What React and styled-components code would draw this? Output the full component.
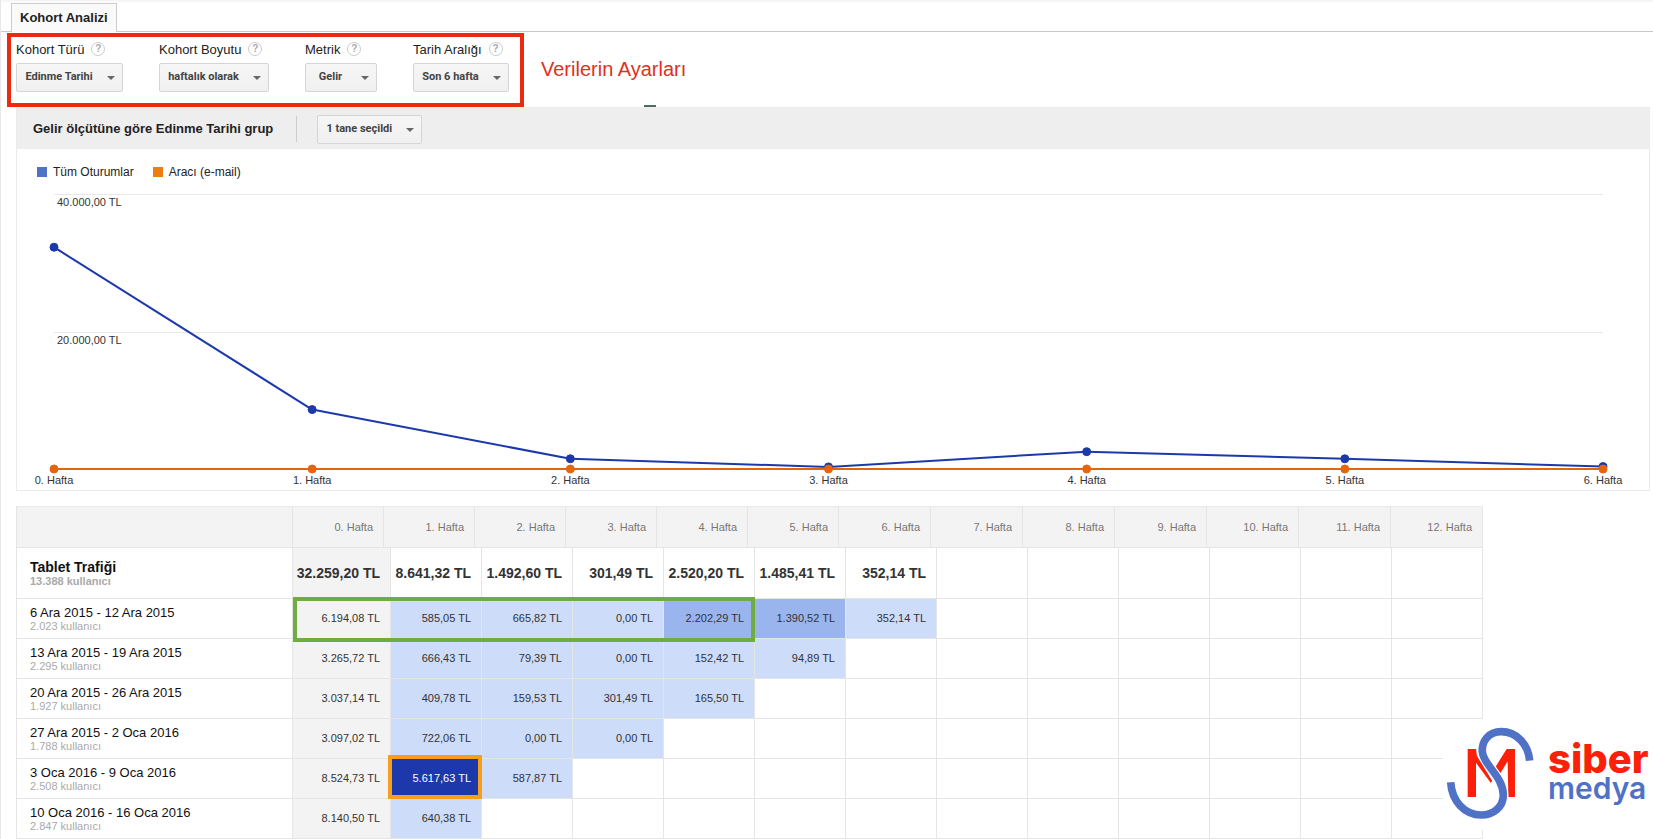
import React from 'react';
import styled, { createGlobalStyle } from 'styled-components';

const GlobalStyle = createGlobalStyle`
    *{
        box-sizing: border-box;
    }
    body{
        margin: 0;
        background-color: #fff;
        color: #222;
        font-family: "Liberation Sans", Arial, sans-serif;
        font-size: 13px;
    }
`;

const Page = styled.main`
    position: relative;
    border-left: 1px solid #e8e8e8;
`;

const TabBar = styled.nav`
    display: flex;
    padding: 3px 0 0 10px;
    border-bottom: 1px solid #c8c8c8;
    box-shadow: inset 0 3px 3px -2px #eee;
`;

const Tab = styled.a`
    height: 29px;
    margin-bottom: -1px;
    padding: 0 8px;
    border: 1px solid #ccc;
    border-bottom: 0;
    background-color: #fafafa;
    color: #222;
    font-weight: bold;
    line-height: 28px;
    text-decoration: none;
`;

const SettingsRow = styled.div`
    display: flex;
    align-items: center;
    gap: 17px;
    padding: 1px 0 0 6px;
`;

const Settings = styled.form`
    display: flex;
    gap: 36px;
    height: 74px;
    padding: 4px 11px 0 5px;
    border: 4px solid #ec2a10;
`;

const Note = styled.p`
    margin: 0;
    padding-bottom: 2px;
    color: #e0301e;
    font-size: 20px;
`;

const Field = styled.div`
    width: ${props => props.$width}px;
`;

const LabelLine = styled.div`
    display: flex;
    align-items: center;
    gap: 7px;
    height: 16px;
    margin-bottom: 6px;
    white-space: nowrap;
`;

const Help = styled.button`
    width: 14px;
    height: 14px;
    padding: 0;
    border: 1px solid #ccc;
    border-radius: 50%;
    background: #fff;
    color: #aaa;
    font: bold 10px/12px "Liberation Sans", Arial, sans-serif;
`;

const SelectBox = styled.div`
    position: relative;
    width: ${props => props.$width}px;
    svg{
        position: absolute;
        right: 8px;
        top: 13px;
        pointer-events: none;
    }
`;

const Select = styled.select`
    appearance: none;
    display: block;
    width: 100%;
    height: 29px;
    padding: 0 21px 2px 0;
    border: 1px solid #d5d5d5;
    border-radius: 2px;
    background: linear-gradient(#f6f6f6, #f0f0f0);
    color: #444;
    font: bold 11px Roboto, sans-serif;
    text-align: center;
    text-align-last: center;
`;

const Panel = styled.section`
    position: relative;
    margin: 0 3px 15px 15px;
    border: 1px solid #ebebeb;
    border-top: 0;
    &::before{
        content: "";
        position: absolute;
        top: -2px;
        left: 627px;
        width: 12px;
        height: 2px;
        background-color: #4d6b60;
    }
`;

const PanelHeader = styled.header`
    display: flex;
    align-items: center;
    height: 42px;
    padding: 2px 0 0 16px;
    background-color: #eee;
    h2{
        margin: 0;
        padding-right: 23px;
        border-right: 1px solid #ccc;
        margin-right: 20px;
        font-size: 13px;
        line-height: 26px;
    }
`;

const Legend = styled.ul`
    display: flex;
    gap: 19px;
    margin: 0;
    padding: 15px 0 0 20px;
    list-style: none;
    font-size: 12px;
    line-height: 16px;
`;

const LegendItem = styled.li`
    display: flex;
    align-items: center;
    gap: 6px;
    &::before{
        content: "";
        width: 10px;
        height: 10px;
        background-color: ${props => props.$color};
    }
`;

const ChartBox = styled.div`
    padding: 6px 46px 0 37px;
    svg{
        display: block;
        width: 100%;
        height: 304px;
        overflow: visible;
    }
    text{
        font-size: 11px;
        fill: #333;
    }
`;

const Table = styled.table`
    display: block;
    margin: 0 170px 0 15px;
    border-left: 1px solid #e5e5e5;
    thead, tbody{
        display: block;
    }
    tr{
        display: grid;
        position: relative;
    }
`;

const HeadRow = styled.tr`
    grid-template-columns: 276fr repeat(6, 91fr) repeat(7, 92fr);
    height: 42px;
    background-color: #f3f3f3;
    border-top: 1px solid #ebebeb;
    border-bottom: 1px solid #e5e5e5;
`;

const HeadCell = styled.th`
    padding: 0 10px 0 0;
    border-right: 1px solid #e5e5e5;
    color: #777;
    font-size: 11px;
    font-weight: normal;
    line-height: 40px;
    text-align: right;
`;

const BodyRow = styled.tr`
    grid-template-columns: 276fr 98fr repeat(12, 91fr);
    height: ${props => props.$total ? 51 : 40}px;
    ${props => props.$mark && `
        &::after{
            content: "";
            position: absolute;
            z-index: 1;
            grid-column: ${props.$mark.columns};
            inset: ${props.$mark.inset};
            border: 4px solid ${props.$mark.color};
        }
    `}
`;

const NameCell = styled.th`
    padding: ${props => props.$total ? 11 : 6}px 0 0 13px;
    border-bottom: 1px solid #e5e5e5;
    border-right: 1px solid #e5e5e5;
    color: #111;
    font-size: ${props => props.$total ? 14 : 13}px;
    font-weight: ${props => props.$total ? 'bold' : 'normal'};
    line-height: 16px;
    text-align: left;
    small{
        display: block;
        color: #aaa;
        font-size: 11px;
        line-height: ${props => props.$total ? 12 : 10}px;
    }
`;

const shades = {
    base: '#f3f3f3',
    low: '#cddcf9',
    mid: '#9ab4ee',
    high: '#1c38aa',
};

const ValueCell = styled.td`
    display: flex;
    align-items: center;
    justify-content: flex-end;
    min-width: 0;
    padding: 0 10px ${props => props.$total ? 0 : 2}px 0;
    border-bottom: 1px solid #e5e5e5;
    border-right: 1px solid #e5e5e5;
    background-color: ${props => shades[props.$shade] || '#fff'};
    color: ${props => props.$shade === 'high' ? '#fff' : '#333'};
    font-size: ${props => props.$total ? 14 : 11}px;
    font-weight: ${props => props.$total ? 'bold' : 'normal'};
    white-space: nowrap;
`;

const LogoBox = styled.div`
    position: absolute;
    z-index: 2;
    right: 0;
    bottom: 9px;
    height: 111px;
    background-color: #fff;
    svg{
        display: block;
    }
`;

const filters = [
    { id: 'type', label: 'Kohort Türü', value: 'Edinme Tarihi', width: 107 },
    { id: 'size', label: 'Kohort Boyutu', value: 'haftalık olarak', width: 110 },
    { id: 'metric', label: 'Metrik', value: 'Gelir', width: 72 },
    { id: 'range', label: 'Tarih Aralığı', value: 'Son 6 hafta', width: 96 },
];

const weeks = [0, 1, 2, 3, 4, 5, 6, 7, 8, 9, 10, 11, 12];

const allSessions = [32259.2, 8641.32, 1492.6, 301.49, 2520.2, 1485.41, 352.14];
const emailSessions = [0, 0, 0, 0, 0, 0, 0];

const total = ['32.259,20', '8.641,32', '1.492,60', '301,49', '2.520,20', '1.485,41', '352,14'];

const cohorts = [
    {
        name: '6 Ara 2015 - 12 Ara 2015',
        users: '2.023',
        values: ['6.194,08', '585,05', '665,82', '0,00', '2.202,29', '1.390,52', '352,14'],
        mark: { columns: '2 / 7', inset: '-2px 0 -3px 0', color: '#70ad40' },
    },
    { name: '13 Ara 2015 - 19 Ara 2015', users: '2.295', values: ['3.265,72', '666,43', '79,39', '0,00', '152,42', '94,89'] },
    { name: '20 Ara 2015 - 26 Ara 2015', users: '1.927', values: ['3.037,14', '409,78', '159,53', '301,49', '165,50'] },
    { name: '27 Ara 2015 - 2 Oca 2016', users: '1.788', values: ['3.097,02', '722,06', '0,00', '0,00'] },
    {
        name: '3 Oca 2016 - 9 Oca 2016',
        users: '2.508',
        values: ['8.524,73', '5.617,63', '587,87'],
        mark: { columns: '3 / 4', inset: '-4px 0 0 -3px', color: '#f79e1b' },
    },
    { name: '10 Oca 2016 - 16 Oca 2016', users: '2.847', values: ['8.140,50', '640,38'] },
];

// cell colour by amount, the first week is always grey
function shadeOf(value, week) {
    if (value === undefined) return null;
    if (week === 0) return 'base';
    const amount = parseFloat(value.replace('.', '').replace(',', '.'));
    if (amount > 5000) return 'high';
    return amount > 1000 ? 'mid' : 'low';
}

const chartTop = 8;
const chartBase = 283;

function yOf(value) {
    return chartBase - (value / 40000) * (chartBase - chartTop);
}

function xOf(index) {
    return `${(index / 6) * 100}%`;
}

function Dropdown({ id, value, width, label }) {
    return (
        <SelectBox $width={width}>
            <Select id={id} aria-label={label} defaultValue={value}>
                <option>{value}</option>
            </Select>
            <svg width="8" height="4" viewBox="0 0 8 4"><path d="M0 0h8L4 4z" fill="#666" /></svg>
        </SelectBox>
    );
}

function Series({ values, color }) {
    return (
        <g stroke={color} fill={color}>
            {values.slice(1).map((value, i) => (
                <line key={i} x1={xOf(i)} y1={yOf(values[i])} x2={xOf(i + 1)} y2={yOf(value)} strokeWidth="2" />
            ))}
            {values.map((value, i) => (
                <circle key={i} cx={xOf(i)} cy={yOf(value)} r="4" />
            ))}
        </g>
    );
}

function Chart() {
    return (
        <ChartBox>
            <svg role="img" aria-label="Gelir">
                {[40000, 20000].map(value => (
                    <g key={value}>
                        <line x1="0" x2="100%" y1={Math.round(yOf(value)) + 0.5} y2={Math.round(yOf(value)) + 0.5} stroke="#e8e8e8" />
                        <text x="3" y={Math.round(yOf(value)) + 12}>{value / 1000}.000,00 TL</text>
                    </g>
                ))}
                <Series values={allSessions} color="#1c39ac" />
                <Series values={emailSessions} color="#e5650f" />
                {allSessions.map((_, i) => (
                    <text key={i} x={xOf(i)} y="298" textAnchor="middle">{i}. Hafta</text>
                ))}
            </svg>
        </ChartBox>
    );
}

const logoCurve = 'M350 182C346 130 308 95 265 95C225 95 206 125 208 155C211 195 271 230 271 285C271 322 240 345 205 345C155 345 117 305 113 247';

function Logo() {
    return (
        <LogoBox>
            <svg width="210" height="111" viewBox="0 0 210 111" role="img" aria-label="siber medya">
                <g transform="translate(-30 -19) scale(0.3333)" fill="none">
                    <path d="M281 147H306V291H286L284 184L261 221L248 200Z" fill="#fb200a" />
                    <path d={logoCurve} stroke="#fff" strokeWidth="30" />
                    <path d="M164 147H189L192 168L238 243L233 248L189 188V291H164Z" fill="#fb200a" />
                    <path d={logoCurve} stroke="#5072c6" strokeWidth="23" />
                </g>
                <text x="105" y="54" fontFamily="Inter, sans-serif" fontSize="40" fontWeight="800" fill="#fb200a">siber</text>
                <text x="105" y="80" fontFamily="Inter, sans-serif" fontSize="30" fontWeight="600" fill="#5072c6">medya</text>
            </svg>
        </LogoBox>
    );
}

export default function App() {
    return (
        <Page>
            <GlobalStyle />
            <TabBar>
                <Tab href="#kohort">Kohort Analizi</Tab>
            </TabBar>

            <SettingsRow>
                <Settings>
                    {filters.map(filter => (
                        <Field key={filter.id} $width={filter.width}>
                            <LabelLine>
                                <label htmlFor={filter.id}>{filter.label}</label>
                                <Help type="button">?</Help>
                            </LabelLine>
                            <Dropdown id={filter.id} value={filter.value} width={filter.width} />
                        </Field>
                    ))}
                </Settings>
                <Note>Verilerin Ayarları</Note>
            </SettingsRow>

            <Panel>
                <PanelHeader>
                    <h2>Gelir ölçütüne göre Edinme Tarihi grup</h2>
                    <Dropdown id="segments" label="Segmentler" value="1 tane seçildi" width={105} />
                </PanelHeader>
                <Legend>
                    <LegendItem $color="#5072c4">Tüm Oturumlar</LegendItem>
                    <LegendItem $color="#ed7d13">Aracı (e-mail)</LegendItem>
                </Legend>
                <Chart />
            </Panel>

            <Table>
                <thead>
                    <HeadRow>
                        <HeadCell />
                        {weeks.map(week => <HeadCell key={week} scope="col">{week}. Hafta</HeadCell>)}
                    </HeadRow>
                </thead>
                <tbody>
                    <BodyRow $total>
                        <NameCell $total scope="row">Tablet Trafiği<small>13.388 kullanıcı</small></NameCell>
                        {weeks.map(week => (
                            <ValueCell key={week} $total $shade={week === 0 ? 'base' : null}>
                                {total[week] && `${total[week]} TL`}
                            </ValueCell>
                        ))}
                    </BodyRow>
                    {cohorts.map(cohort => (
                        <BodyRow key={cohort.name} $mark={cohort.mark}>
                            <NameCell scope="row">{cohort.name}<small>{cohort.users} kullanıcı</small></NameCell>
                            {weeks.map(week => (
                                <ValueCell key={week} $shade={shadeOf(cohort.values[week], week)}>
                                    {cohort.values[week] && `${cohort.values[week]} TL`}
                                </ValueCell>
                            ))}
                        </BodyRow>
                    ))}
                </tbody>
            </Table>
            <Logo />
        </Page>
    );
}
